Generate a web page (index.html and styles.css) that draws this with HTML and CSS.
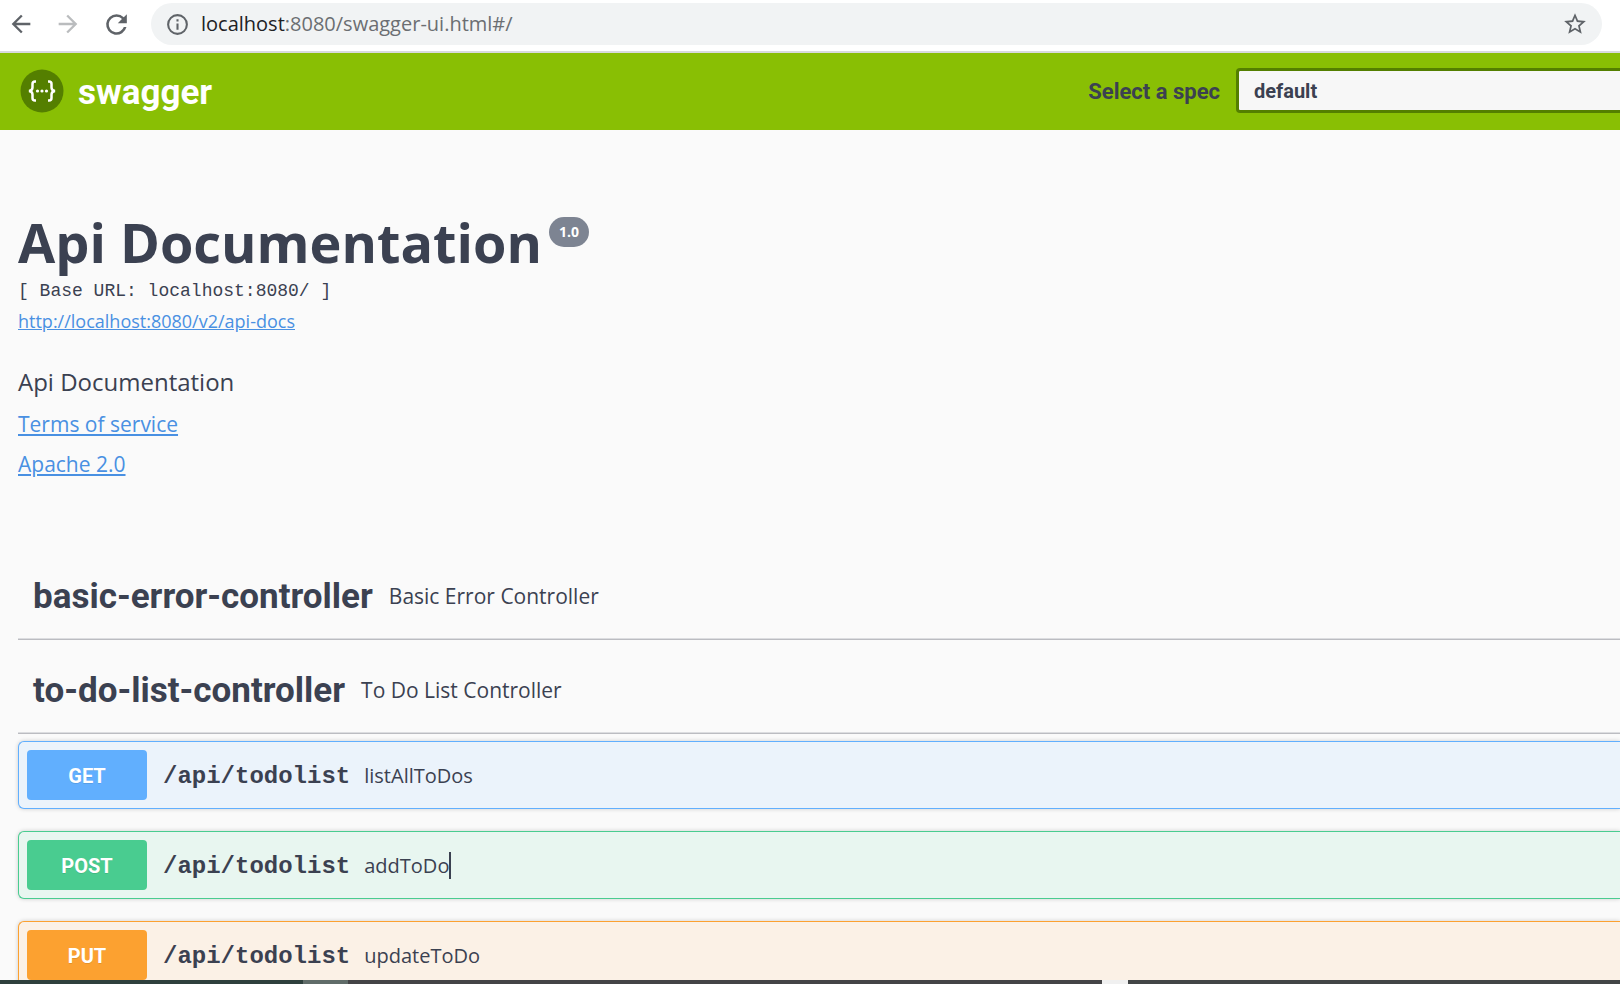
FILE: index.html
```html
<!DOCTYPE html>
<html lang="en">
<head>
<meta charset="utf-8">
<title>Swagger UI</title>
<link rel="stylesheet" href="styles.css">
</head>
<body>
<div class="browser-bar">
  <button class="nav-button" type="button" aria-label="Back">
    <svg viewBox="0 0 24 24" width="28" height="28"><path d="M20 11H7.83l5.59-5.59L12 4l-8 8 8 8 1.41-1.41L7.83 13H20z"/></svg>
  </button>
  <button class="nav-button nav-button-off" type="button" aria-label="Forward">
    <svg viewBox="0 0 24 24" width="28" height="28"><path d="M12 4l-1.41 1.41L16.17 11H4v2h12.17l-5.58 5.59L12 20l8-8z"/></svg>
  </button>
  <button class="nav-button" type="button" aria-label="Reload">
    <svg viewBox="0 0 24 24" width="31" height="31"><path d="M17.65 6.35A7.96 7.96 0 0 0 12 4a8 8 0 1 0 7.73 10h-2.08A6 6 0 1 1 12 6c1.66 0 3.14.69 4.22 1.78L13 11h7V4z"/></svg>
  </button>
  <div class="address">
    <svg class="address-icon" viewBox="0 0 24 24" width="25" height="25"><path d="M11 7h2v2h-2zm0 4h2v6h-2zm1-9a10 10 0 1 0 0 20 10 10 0 0 0 0-20zm0 18a8 8 0 1 1 0-16 8 8 0 0 1 0 16z"/></svg>
    <span class="address-text"><span class="address-host">localhost</span>:8080/swagger-ui.html#/</span>
    <button class="star-button" type="button" aria-label="Bookmark this page">
      <svg viewBox="0 0 24 24" width="26" height="26"><path d="M22 9.24l-7.19-.62L12 2 9.19 8.63 2 9.24l5.46 4.73L5.82 21 12 17.27 18.18 21l-1.63-7.03zM12 15.4l-3.76 2.27 1-4.28-3.32-2.88 4.38-.38L12 6.1l1.71 4.04 4.38.38-3.32 2.88 1 4.28z"/></svg>
    </button>
  </div>
</div>

<header class="topbar">
  <a class="brand" href="#/">
    <svg viewBox="0 0 44 44" width="44" height="44">
      <circle cx="22" cy="22" r="21.500" fill="#547f00"/>
      <g fill="none" stroke="#fff" stroke-width="2.500">
        <path d="M16 12.500h-1q-2.500 0-2.500 2.500v3.500q0 3-3.500 3.500q3.500 .5 3.500 3.500v3.500q0 2.500 2.500 2.500h1"/>
        <path d="M28 12.500h1q2.500 0 2.500 2.500v3.500q0 3 3.500 3.500q-3.500 .5-3.500 3.500v3.500q0 2.500-2.500 2.500h-1"/>
      </g>
      <g fill="#fff"><circle cx="17.500" cy="22" r="1.600"/><circle cx="22" cy="22" r="1.600"/><circle cx="26.500" cy="22" r="1.600"/></g>
    </svg>
    <span class="brand-name">swagger</span>
  </a>
  <div class="spec">
    <label class="spec-label" for="spec">Select a spec</label>
    <select class="spec-select" id="spec"><option>default</option></select>
  </div>
</header>

<main class="content">
  <section class="info">
    <h1 class="title">Api Documentation <span class="version">1.0</span></h1>
    <pre class="base-url">[ Base URL: localhost:8080/ ]</pre>
    <a class="docs-link" href="#/v2/api-docs">http://localhost:8080/v2/api-docs</a>
    <p class="description">Api Documentation</p>
    <a class="info-link" href="#/terms">Terms of service</a>
    <a class="info-link" href="#/license">Apache 2.0</a>
  </section>

  <section>
    <div class="tag"><h2 class="tag-name">basic-error-controller</h2><span class="tag-text">Basic Error Controller</span></div>
  </section>
  <section>
    <div class="tag"><h2 class="tag-name">to-do-list-controller</h2><span class="tag-text">To Do List Controller</span></div>
    <div class="operations">
      <div class="operation get"><button class="method" type="button">GET</button><span class="path">/api/todolist</span><span class="summary">listAllToDos</span></div>
      <div class="operation post"><button class="method" type="button">POST</button><span class="path">/api/todolist</span><span class="summary caret">addToDo</span></div>
      <div class="operation put"><button class="method" type="button">PUT</button><span class="path">/api/todolist</span><span class="summary">updateToDo</span></div>
    </div>
  </section>
</main>
<footer class="taskbar"></footer>
</body>
</html>
```
FILE: styles.css
```css
* { box-sizing: border-box; }

body {
  display: flex;
  flex-direction: column;
  height: 100vh;
  margin: 0;
  overflow: hidden;
  background: #fafafa;
  color: #3b4151;
  font-family: "Open Sans", sans-serif;
}

button { border: 0; padding: 0; background: none; font-family: inherit; }
svg { display: block; }

/* Browser bar */
.browser-bar {
  display: flex;
  flex: none;
  align-items: center;
  gap: 19px;
  padding: 3px 18px 6px 7px;
  border-bottom: 2px solid #d9dadd;
  background: #fff;
}
.nav-button { fill: #5f6368; }
.nav-button-off { fill: #babcbe; }
.address {
  display: flex;
  flex: 1;
  align-items: center;
  gap: 11px;
  height: 42px;
  padding: 0 14px;
  border-radius: 21px;
  background: #f1f3f4;
  fill: #5f6368;
}
.address-icon { flex: none; }
.address-text { flex: 1; color: #6b6e72; font-size: 20px; line-height: 28px; }
.address-host { color: #202124; }
.star-button { fill: #5f6368; }

/* Swagger header */
.topbar {
  display: flex;
  flex: none;
  align-items: center;
  justify-content: space-between;
  height: 77px;
  padding: 0 0 2px 20px;
  background: #89bf04;
}
.brand {
  display: flex;
  align-items: center;
  gap: 14px;
  color: #fff;
  text-decoration: none;
}
.brand-name { padding-top: 4px; font: 700 35px/44px Roboto, sans-serif; }
.spec { display: flex; align-items: center; gap: 16px; }
.spec-label { padding-top: 2px; font: 700 22px/30px Roboto, sans-serif; }
.spec-select {
  width: 384px;
  height: 45px;
  padding: 0 15px;
  appearance: none;
  border: 3px solid #547f00;
  border-right: 0;
  border-radius: 4px 0 0 4px;
  background: #f7f7f7;
  color: #3b4151;
  font: 700 20px Roboto, sans-serif;
}

/* Page */
.content { flex: 1; min-height: 0; padding: 80px 0 0 18px; overflow: hidden; }
.info { display: flex; flex-direction: column; align-items: flex-start; margin-bottom: 62px; }
.title {
  display: flex;
  align-items: flex-start;
  gap: 7px;
  margin: 0 0 2px;
  font-size: 54px;
  font-weight: 700;
  line-height: 64px;
}
.version {
  margin-top: 7px;
  padding: 0 10px;
  border-radius: 15px;
  background: #7d8492;
  color: #fff;
  font-size: 14px;
  line-height: 30px;
}
.base-url { margin: 0; font-family: "Liberation Mono", monospace; font-size: 18px; line-height: 30px; }
.docs-link, .info-link { color: #4990e2; }
.docs-link { font-size: 18px; line-height: 30px; }
.description { margin: 29px 0 5px; font-size: 24px; line-height: 34px; }
.info-link { font-size: 21px; line-height: 40px; }

.tag {
  display: flex;
  align-items: center;
  gap: 16px;
  height: 94px;
  padding: 6px 15px 0;
  border-bottom: 1px solid #bbbcc1;
  box-shadow: inset 0 -1px #dcdde0;
}
.tag-name { margin: 0; padding-top: 2px; font: 700 35px/46px Roboto, sans-serif; }
.tag-text { font-size: 21px; line-height: 28px; }

.operations { display: grid; gap: 22px; padding-top: 7px; }
.operation {
  display: flex;
  align-items: center;
  padding: 8px;
  border: 1px solid;
  border-right: 0;
  border-radius: 6px 0 0 6px;
  box-shadow: 0 0 4px rgba(0, 0, 0, .19);
}
.method {
  width: 120px;
  height: 50px;
  padding-top: 2px;
  border-radius: 4px;
  color: #fff;
  font: 700 20px Roboto, sans-serif;
  text-shadow: 0 1px rgba(0, 0, 0, .1);
}
.path { padding: 3px 14px 0 16px; font: 700 24px/32px "Liberation Mono", monospace; }
.summary { font-size: 20px; line-height: 27px; }
.caret { border-right: 2px solid #3b4151; }
.get { border-color: #61affe; background: #ebf3fb; }
.get .method { background: #61affe; }
.post { border-color: #49cc90; background: #e8f6f0; }
.post .method { background: #49cc90; }
.put { border-color: #fca130; background: #fbf1e6; }
.put .method { background: #fca130; }

/* Desktop edge below the window */
.taskbar {
  flex: none;
  height: 4px;
  background: linear-gradient(90deg, #2e403d 303px, #606c69 303px 348px, #444446 348px 68%, #f0f0f0 68% 69.6%, #424546 69.6%);
}
```
